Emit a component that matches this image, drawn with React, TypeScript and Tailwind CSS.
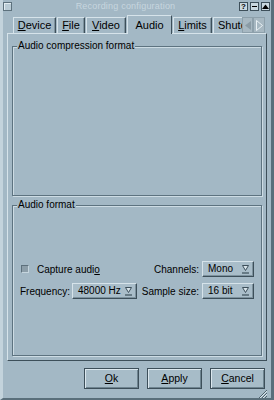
import React from "react";

const DARK = "#4c616d";

function ComboArrow() {
  return (
    <svg width="7" height="9" viewBox="0 0 7 9" className="shrink-0">
      <path d="M0.5 0.5 H6.5 L3.5 5.5 Z" fill="#d8e4ea" stroke="#3d4f5a" strokeWidth="1" />
      <line x1="0" y1="8" x2="7" y2="8" stroke="#3d4f5a" strokeWidth="1.2" />
    </svg>
  );
}

function Combo({ value, w }: { value: string; w: string }) {
  return (
    <div
      className={`${w} h-[16px] flex items-center justify-between pl-[5px] pr-[4px] bg-[#a9bdc9] border-t border-l border-t-[#d6e3ea] border-l-[#d6e3ea] border-r border-b border-r-[#3d4f5a] border-b-[#3d4f5a] shadow-[inset_-1px_-1px_0_#7d929e]`}
    >
      <span className="text-[10px] leading-none">{value}</span>
      <ComboArrow />
    </div>
  );
}

function Btn({ children }: { children: React.ReactNode }) {
  return (
    <div className="w-[55px] h-[21px] flex items-center justify-center border border-[#3d4f5a] bg-[#a7bcc8] shadow-[inset_1px_1px_0_#dbe7ee,inset_-1px_-1px_0_#6e8490] text-[10.5px]">
      {children}
    </div>
  );
}

function Tab({ w, children, sel }: { w: string; children: React.ReactNode; sel?: boolean }) {
  if (sel) {
    return (
      <div
        className={`${w} h-[19px] -mb-[1px] relative z-10 bg-[#a3b8c5] border-t border-l border-t-[#d6e3ea] border-l-[#d6e3ea] border-r border-r-[#3d4f5a] flex items-center justify-center text-[11px] shrink-0`}
      >
        {children}
      </div>
    );
  }
  return (
    <div
      className={`${w} h-[16px] border-t border-l border-t-[#d6e3ea] border-l-[#d6e3ea] border-r border-r-[#3d4f5a] flex items-center justify-center text-[11px] shrink-0 shadow-[inset_-1px_0_0_#7d929e]`}
    >
      {children}
    </div>
  );
}

export default function App() {
  return (
    <div className="w-[274px] h-[400px] bg-[#a3b8c5] flex flex-col font-['Liberation_Sans',Arial,sans-serif] text-black overflow-hidden border-l-[3px] border-l-[#c3d3dc] border-r-[3px] border-r-[#5a6f7b] border-b-[2px] border-b-[#5a6f7b]">
      {/* title bar */}
      <div className="h-[13px] flex items-center shrink-0">
        <div className="w-[9px] h-[9px] border border-[#5d717d] bg-[#b9cbd5] shadow-[inset_1px_1px_0_#e2ecf1]" />
        <div className="flex-1 text-center text-[9px] leading-none text-[#c7d6df] tracking-[0.2px]">
          Recording configuration
        </div>
        <div className="flex gap-[2px] mr-[1px]">
          <div className="w-[9px] h-[9px] border border-[#3d4f5a] bg-[#c9d8e0] flex items-center justify-center text-[8px] leading-none font-bold">?</div>
          <div className="w-[9px] h-[9px] border border-[#3d4f5a] bg-[#c9d8e0] flex items-center justify-center">
            <div className="w-[5px] h-[1.5px] bg-black" />
          </div>
          <div className="w-[9px] h-[9px] border border-[#3d4f5a] bg-[#c9d8e0] flex items-end justify-center pb-[1px]">
            <svg width="7" height="5" viewBox="0 0 7 5">
              <path d="M0 5 L3.5 0.5 L7 5 Z" fill="#000" />
            </svg>
          </div>
        </div>
      </div>

      <div className="flex-1 flex flex-col px-[4px]">
        {/* tabs */}
        <div className="h-[18px] mt-[2px] flex items-end shrink-0">
          <div className="flex-1 overflow-hidden flex items-end pl-[6px] gap-[1px] h-[19px] -mb-[1px] pb-[1px]">
            <Tab w="w-[43px]"><span><u>D</u>evice</span></Tab>
            <Tab w="w-[28px]"><span><u>F</u>ile</span></Tab>
            <Tab w="w-[40px]"><span><u>V</u>ideo</span></Tab>
            <Tab w="w-[45px]" sel><span>Audio</span></Tab>
            <Tab w="w-[39px]"><span><u>L</u>imits</span></Tab>
            <Tab w="w-[60px]"><span className="pl-[4px] w-full text-left">Shutdown</span></Tab>
          </div>
          <div className="w-[23px] h-[16px] flex shrink-0 mr-[2px]">
            <div className="w-[11px] h-full bg-[#a7b8c2] border border-[#8da0ab] flex items-center justify-center">
              <svg width="6" height="9" viewBox="0 0 6 9">
                <path d="M6 0 L0 4.5 L6 9 Z" fill="#8a9ba5" />
              </svg>
            </div>
            <div className="w-[12px] h-full bg-[#a7b8c2] border border-[#8da0ab] flex items-center justify-center">
              <svg width="7" height="11" viewBox="0 0 7 11">
                <path d="M0.5 0.5 L6.5 5.5 L0.5 10.5 Z" fill="#a7b8c2" stroke="#e8f0f4" strokeWidth="1" />
              </svg>
            </div>
          </div>
        </div>

        {/* panel */}
        <div className="h-[328px] shrink-0 border-t border-l border-t-[#d6e3ea] border-l-[#d6e3ea] border-r border-b border-r-[#3d4f5a] border-b-[#3d4f5a] px-[4px] pt-[6px] flex flex-col gap-[3px]">
          <fieldset className="h-[156px] border border-[#5d7380] shadow-[inset_1px_1px_0_#cddce4,1px_1px_0_#cddce4]">
            <legend className="ml-[4px] px-[1px] text-[10px] leading-[12px] bg-[#a3b8c5]">Audio compression format</legend>
          </fieldset>
          <fieldset className="h-[157px] border border-[#5d7380] shadow-[inset_1px_1px_0_#cddce4,1px_1px_0_#cddce4]">
            <legend className="ml-[4px] px-[1px] text-[10px] leading-[12px] bg-[#a3b8c5]">Audio format</legend>
            <div className="pt-[50px] pl-[7px] pr-[7px]">
              <div className="grid grid-cols-[50px_65px_1fr_52px] gap-x-[2px] gap-y-[6px] items-center text-[10px]">
                <div className="col-span-2 flex items-center gap-[8px] pl-[1px]">
                  <div className="w-[8px] h-[8px] bg-[#8c9ea9] border-t border-l border-t-[#5d707c] border-l-[#5d707c] border-r border-b border-r-[#c5d5de] border-b-[#c5d5de]" />
                  <span>Capture audi<u>o</u></span>
                </div>
                <div className="text-right pr-[1px]">Channels:</div>
                <Combo value="Mono" w="w-[52px]" />
                <div>Frequency:</div>
                <Combo value="48000 Hz" w="w-[65px]" />
                <div className="text-right pr-[1px]">Sample size:</div>
                <Combo value="16 bit" w="w-[52px]" />
              </div>
            </div>
          </fieldset>
        </div>

        {/* buttons */}
        <div className="mt-[7px] flex justify-end gap-[8px] pr-[2px] shrink-0">
          <Btn><span><u>O</u>k</span></Btn>
          <Btn><span><u>A</u>pply</span></Btn>
          <Btn><span><u>C</u>ancel</span></Btn>
        </div>

        <div className="flex-1 flex justify-end items-end">
          <svg width="10" height="10" viewBox="0 0 10 10">
            <line x1="10" y1="1" x2="1" y2="10" stroke={DARK} strokeWidth="1" />
            <line x1="10" y1="4" x2="4" y2="10" stroke={DARK} strokeWidth="1" />
            <line x1="10" y1="7" x2="7" y2="10" stroke={DARK} strokeWidth="1" />
            <line x1="10" y1="2" x2="2" y2="10" stroke="#dbe7ee" strokeWidth="1" />
            <line x1="10" y1="5" x2="5" y2="10" stroke="#dbe7ee" strokeWidth="1" />
          </svg>
        </div>
      </div>
    </div>
  );
}
